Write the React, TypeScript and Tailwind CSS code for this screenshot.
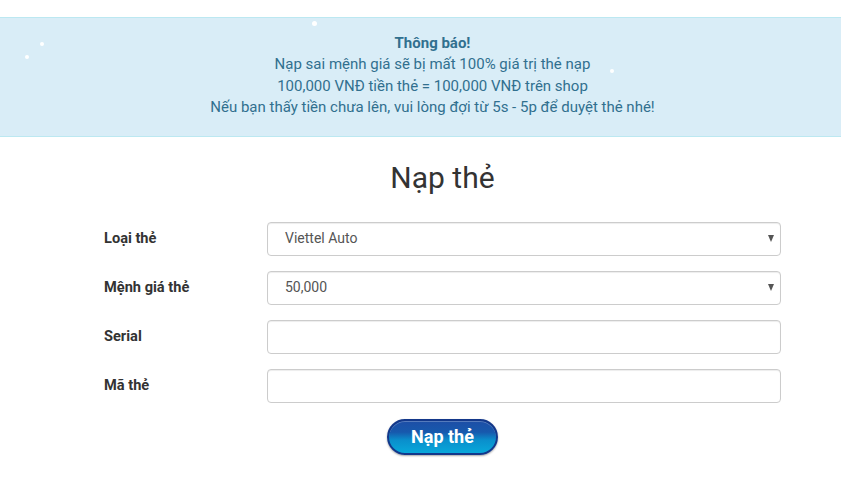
const rows = [
  { label: 'Loại thẻ', value: 'Viettel Auto', select: true },
  { label: 'Mệnh giá thẻ', value: '50,000', select: true },
  { label: 'Serial', value: '', select: false },
  { label: 'Mã thẻ', value: '', select: false },
]

function Snow({ className }: { className: string }) {
  return <span className={`absolute rounded-full bg-white ${className}`} />
}

export default function App() {
  return (
    <div className="min-h-[491px] bg-white pt-[17px] font-['Roboto',sans-serif] text-[14px] text-[#333]">
      <div className="relative border-y border-[#bce8f1] bg-[#d9edf7] pt-[15px] pb-[17px] pl-[24px] text-center text-[15px] leading-[21.4px] text-[#31708f]">
        <p className="font-bold">Thông báo!</p>
        <p>Nạp sai mệnh giá sẽ bị mất 100% giá trị thẻ nạp</p>
        <p>100,000 VNĐ tiền thẻ = 100,000 VNĐ trên shop</p>
        <p>Nếu bạn thấy tiền chưa lên, vui lòng đợi từ 5s - 5p để duyệt thẻ nhé!</p>
        <Snow className="left-[40px] top-[24px] h-[4px] w-[4px]" />
        <Snow className="left-[25px] top-[37px] h-[4px] w-[4px]" />
        <Snow className="left-[312px] top-[3px] h-[5px] w-[5px]" />
        <Snow className="left-[610px] top-[51px] h-[4px] w-[4px]" />
      </div>

      <h2 className="mt-[24px] pl-[44px] text-center text-[30px] leading-[33px] font-normal text-[#333]">Nạp thẻ</h2>

      <div className="mt-[28px] ml-[104px] flex w-[677px] flex-col gap-[15px]">
        {rows.map((r) => (
          <div key={r.label} className="flex h-[34px] items-center">
            <label className="w-[163px] text-[14.6px] font-bold">{r.label}</label>
            <div className="flex h-[34px] flex-1 items-center justify-between rounded-[4px] border border-[#ccc] bg-white pr-[6px] pl-[17px] text-[#555] shadow-[inset_0_1px_1px_rgba(0,0,0,0.075)]">
              <span>{r.value}</span>
              {r.select && (
                <span className="h-0 w-0 border-x-[3.5px] border-t-[7px] border-x-transparent border-t-[#555]" />
              )}
            </div>
          </div>
        ))}
      </div>

      <div className="mt-[16px] flex justify-center pl-[44px]">
        <button className="relative h-[36px] w-[111px] overflow-hidden rounded-full border-2 border-[#13388a] bg-[linear-gradient(to_bottom,#1d4ea6_0%,#1759ad_35%,#0a8fcc_60%,#08a8da_100%)] text-[18px] font-bold text-white shadow-[0_1px_2px_rgba(0,0,0,0.35),inset_0_1px_0_rgba(255,255,255,0.25)]">
          Nạp thẻ
        </button>
      </div>
    </div>
  )
}
